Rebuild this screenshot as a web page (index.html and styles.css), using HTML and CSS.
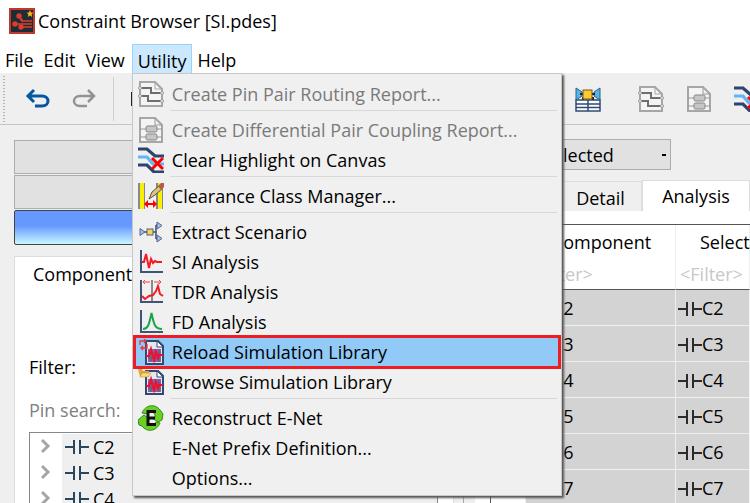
FILE: index.html
```
<!DOCTYPE html>
<html lang="en">
<head>
<meta charset="utf-8">
<title>Constraint Browser [SI.pdes]</title>
<link rel="stylesheet" href="styles.css">
</head>
<body>
<svg class="defs" aria-hidden="true">
  <symbol id="route" viewBox="0 0 26 26">
    <path d="M2 1H17L24 8V25H2Z" fill="#f4f4f4" stroke="#a6a6a6" stroke-width="2"/>
    <path d="M17 1V8H24" fill="none" stroke="#a6a6a6" stroke-width="1"/>
    <path d="M2 7H13V12H24M2 15H10V20H24" fill="none" stroke="#6e6e6e" stroke-width="2"/>
    <g fill="#eee" stroke="#999"><circle cx="2" cy="7" r="1.5"/><circle cx="24" cy="12" r="1.5"/><circle cx="2" cy="15" r="1.5"/><circle cx="24" cy="20" r="1.5"/></g>
  </symbol>
  <symbol id="couple" viewBox="0 0 26 26">
    <path d="M2 1H17L24 8V25H2Z" fill="#f4f4f4" stroke="#a6a6a6" stroke-width="2"/>
    <path d="M17 1V8H24M2 12H24M2 20H24" fill="none" stroke="#999" stroke-width="1"/>
    <g fill="#c6c6c6" stroke="#858585"><rect x="8" y="9" width="11" height="6" rx="1.5"/><rect x="8" y="17" width="11" height="6" rx="1.5"/></g>
  </symbol>
  <symbol id="clear" viewBox="0 0 26 26">
    <g fill="none" stroke-width="3.2"><path d="M0 10H9L15 17H26" stroke="#64b5f6"/><path d="M0 2H9L17 9H26M0 18H9L16 25H26" stroke="#2b4570"/></g>
    <path d="M14 11L25 22M25 11L14 22" stroke="#f00" stroke-width="3"/>
  </symbol>
  <symbol id="wave" viewBox="0 0 26 26">
    <path d="M8 2H20L25 7V25H8Z" fill="#e2e7f0" stroke="#34496f" stroke-width="2"/>
    <path d="M19 2V8H25Z" fill="#fff" stroke="#34496f"/>
    <rect x="10" y="10" width="13" height="13" fill="#93609f"/>
    <path d="M13 10V23M17 10V23M21 10V23M10 14H23M10 19H23" stroke="#6a4688" stroke-width=".7"/>
    <path d="M8 17H11L13 10L16 21L18 13L20 19L21 16H25" fill="none" stroke="#f01028" stroke-width="2"/>
  </symbol>
  <symbol id="cap" viewBox="0 0 24 16"><path d="M0 8H9M15 8H24M9 1V15M15 1V15" stroke="currentColor" stroke-width="2"/></symbol>
  <symbol id="chev" viewBox="0 0 10 16"><path d="M1 2L7 8L1 14" fill="none" stroke="#a5a5a5" stroke-width="3"/></symbol>
</svg>

<header class="titlebar">
  <svg class="logo" viewBox="0 0 26 26"><rect x="1" y="1" width="24" height="24" fill="#1d2c37" stroke="#c0392b" stroke-width="2"/>
    <g fill="#dc3c2a"><circle cx="10" cy="8" r="2.700"/><circle cx="6" cy="16" r="2.700"/><circle cx="12" cy="19" r="2.700"/></g>
    <path d="M10 8L14 13H23M6 16H23M12 19H23M11 11L14 14" fill="none" stroke="#dc3c2a" stroke-width="1.300"/>
    <path d="M21 2L22 4.500L24.500 4.700L22.600 6.300L23.200 9L21 7.500L18.800 9L19.400 6.300L17.500 4.700L20 4.500Z" fill="#fbb51d"/></svg>
  <h1>Constraint Browser [SI.pdes]</h1>
</header>

<nav class="menubar">
  <button>File</button><button>Edit</button><button>View</button>
  <div class="drop">
    <button class="open">Utility</button>
    <div class="menu" role="menu">
      <button role="menuitem" disabled><svg><use href="#route"/></svg>Create Pin Pair Routing Report...</button>
      <hr>
      <button role="menuitem" disabled><svg><use href="#couple"/></svg>Create Differential Pair Coupling Report...</button>
      <button role="menuitem"><svg><use href="#clear"/></svg>Clear Highlight on Canvas</button>
      <hr>
      <button role="menuitem"><svg viewBox="0 0 26 26"><rect width="7" height="26" fill="#888"/><rect x="2" width="4" height="26" fill="#f8f000"/><rect x="18" width="7" height="26" fill="#888"/><rect x="20" width="4" height="26" fill="#f8f000"/><path d="M11 16L14 9L21 3L24 6L17 12Z" fill="#d9c67c" stroke="#5d5137"/><path d="M20 3L23 0H26V4L23 7Z" fill="#b65b4c"/><path d="M8 21H17" stroke="#f00" stroke-width="2"/><path d="M6 21L10 17V25ZM19 21L15 17V25Z" fill="#f00"/></svg>Clearance Class Manager...</button>
      <hr>
      <button role="menuitem"><svg viewBox="0 0 26 26"><path d="M5 13H18M18 6V20M18 6H20M18 20H20" fill="none" stroke="#3c4d70" stroke-width="1.500"/><g fill="#a9bde4" stroke="#52698f"><path d="M2 9.500L7 13L2 16.500Z"/><path d="M19 3L24 6.500L19 10Z"/><path d="M19 16L24 19.500L19 23Z"/></g><rect x="9" y="10" width="6" height="6" fill="#f8cf67" stroke="#52606e"/></svg>Extract Scenario</button>
      <button role="menuitem"><svg viewBox="0 0 26 26"><path d="M3 1V23H25" fill="none" stroke="#405478" stroke-width="2"/><path d="M4 13H6L8 5L11 19L13 10L15 14L17 12L19 13H24" fill="none" stroke="#f41c24" stroke-width="2"/></svg>SI Analysis</button>
      <button role="menuitem"><svg viewBox="0 0 26 26"><path d="M3 1V23H25" fill="none" stroke="#405478" stroke-width="2"/><path d="M14 1V22" stroke="#222"/><path d="M5 3H12M16 3H23M7 1L5 3L7 5M21 1L23 3L21 5" fill="none" stroke="#e44"/><path d="M4 17L7 20L11 17L15 16L18 12L20 7L22 15L25 17" fill="none" stroke="#f41c24" stroke-width="2"/></svg>TDR Analysis</button>
      <button role="menuitem"><svg viewBox="0 0 26 26"><path d="M3 1V23H25" fill="none" stroke="#405478" stroke-width="2"/><path d="M5 20C10 20 11 16 13.500 4C16 16 17 20 24 20" fill="none" stroke="#1ba548" stroke-width="2"/></svg>FD Analysis</button>
      <button role="menuitem" class="active"><svg viewBox="0 0 26 26"><use href="#wave"/><path d="M2 6V2H8M6 0L8 2L6 4M9 5V9H3M5 7L3 9L5 11" fill="none" stroke="#f0323c" stroke-width="1.300"/></svg>Reload Simulation Library</button>
      <button role="menuitem"><svg viewBox="0 0 26 26"><use href="#wave"/><path d="M0 0H4L5 2H11V8H2Z" fill="#dda83a"/><path d="M2 8L4 4H13L10 8Z" fill="#fbd878" stroke="#b98b35" stroke-width=".5"/></svg>Browse Simulation Library</button>
      <hr>
      <button role="menuitem"><svg viewBox="0 0 26 26"><path d="M4 8C7 0 17-2 22 5L25 9L24 15L20 17L14 13H17C18 7 12 4 9 9Z" fill="#69cf25" stroke="#318c16"/><path d="M22 18C19 26 9 28 4 21L1 20L0 15L6 10L12 14L9 16C10 21 16 21 18 17Z" fill="#69cf25" stroke="#318c16"/><path d="M18 6.500H10V19.500H18M10 13H17" fill="none" stroke="#111" stroke-width="3"/></svg>Reconstruct E-Net</button>
      <button role="menuitem"><svg></svg>E-Net Prefix Definition...</button>
      <button role="menuitem"><svg></svg>Options...</button>
    </div>
  </div>
  <button>Help</button>
</nav>

<div class="toolbar">
  <div class="tools">
    <i class="grip"></i>
    <button aria-label="Undo"><svg viewBox="0 0 26 26"><path d="M9 4L3 10L9 16M3 10H17C25 10 25 20 17 20H10" fill="none" stroke="#0557a4" stroke-width="3"/></svg></button>
    <button aria-label="Redo"><svg viewBox="0 0 26 26"><path d="M17 4L23 10L17 16M23 10H9C1 10 1 20 9 20H16" fill="none" stroke="#929292" stroke-width="2.500"/></svg></button>
    <i class="rule"></i>
    <i class="peek"></i>
  </div>
  <div class="tools right">
    <button aria-label="Component table"><svg viewBox="0 0 26 26"><path d="M1 14H25V25H1ZM1 18H25M1 21.500H25M13 14V25" fill="#fff" stroke="#304a76" stroke-width="1.500"/><path d="M1 2L7 6V10L1 14ZM25 2L19 6V10L25 14Z" fill="#52b7e8" stroke="#305d88"/><path d="M5 8H20M8 11V14M18 11V14" stroke="#222" stroke-width="2"/><rect x="8" y="4" width="9" height="9" fill="#ffc928" stroke="#6c5930"/></svg></button>
    <i class="rule tall"></i><i class="grip"></i>
    <button aria-label="Routing report"><svg><use href="#route"/></svg></button>
    <button aria-label="Coupling report"><svg><use href="#couple"/></svg></button>
    <button aria-label="Clear highlight"><svg><use href="#clear"/></svg></button>
  </div>
</div>

<main class="workspace">
  <section class="side">
    <button class="bar" aria-label="First view"></button>
    <button class="bar" aria-label="Second view"></button>
    <button class="bar current" aria-label="Current view"></button>
    <div class="panel">
      <h2>Components</h2>
      <label for="filter">Filter:</label><input id="filter">
      <label class="pins" for="pins">Pin search:</label><input id="pins" disabled>
      <ul class="tree">
        <li><svg class="chev"><use href="#chev"/></svg><span><svg class="cap"><use href="#cap"/></svg>C2</span></li>
        <li><svg class="chev"><use href="#chev"/></svg><span><svg class="cap"><use href="#cap"/></svg>C3</span></li>
        <li><svg class="chev"><use href="#chev"/></svg><span><svg class="cap"><use href="#cap"/></svg>C4</span></li>
      </ul>
    </div>
  </section>
  <i class="splitter"></i>
  <section class="content">
    <select aria-label="Scope"><option>Selected</option></select>
    <div class="tabs"><button>Detail</button><button class="on">Analysis</button></div>
    <div class="sheet">
      <table>
        <colgroup><col class="num"><col class="comp"><col></colgroup>
        <thead>
          <tr><th></th><th>Component</th><th class="sel">Select</th></tr>
          <tr class="filters"><td></td><td><input aria-label="Filter component" placeholder="&lt;Filter&gt;"></td><td><input aria-label="Filter select" placeholder="&lt;Filter&gt;"></td></tr>
        </thead>
        <tbody>
          <tr><th></th><td><svg class="cap"><use href="#cap"/></svg>C2</td><td><svg class="cap"><use href="#cap"/></svg>C2</td></tr>
          <tr><th></th><td><svg class="cap"><use href="#cap"/></svg>C3</td><td><svg class="cap"><use href="#cap"/></svg>C3</td></tr>
          <tr><th></th><td><svg class="cap"><use href="#cap"/></svg>C4</td><td><svg class="cap"><use href="#cap"/></svg>C4</td></tr>
          <tr><th></th><td><svg class="cap"><use href="#cap"/></svg>C5</td><td><svg class="cap"><use href="#cap"/></svg>C5</td></tr>
          <tr><th></th><td><svg class="cap"><use href="#cap"/></svg>C6</td><td><svg class="cap"><use href="#cap"/></svg>C6</td></tr>
          <tr><th></th><td><svg class="cap"><use href="#cap"/></svg>C7</td><td><svg class="cap"><use href="#cap"/></svg>C7</td></tr>
        </tbody>
      </table>
    </div>
  </section>
</main>
</body>
</html>
```
FILE: styles.css
```
* { box-sizing: border-box; }
body {
  margin: 0;
  height: 100vh;
  overflow: hidden;
  display: flex;
  flex-direction: column;
  background: #efefef;
  color: #000;
  font: 18px/24px "Open Sans", "Noto Sans", sans-serif;
}
button, input, select { font: inherit; color: inherit; }
button { border: 0; padding: 0; background: none; white-space: nowrap; }
svg { width: 26px; height: 26px; flex: none; }
.defs { position: absolute; width: 0; height: 0; }

.titlebar { display: flex; align-items: center; gap: 3px; padding: 0 9px 2px; height: 44px; flex: none; background: #fff; }
h1, h2 { margin: 0; font: inherit; }

.menubar { display: flex; height: 29px; flex: none; background: #fff; }
.menubar > button, .open { padding: 0 5px; height: 29px; line-height: 32px; }
.open { border: 1px solid #99d1ff; border-bottom: 0; background: #cce8ff; }
.drop { position: relative; margin-left: 2px; }
.menu {
  position: absolute;
  z-index: 5;
  top: 29px;
  left: 0;
  width: 430px;
  padding: 5px 0 2px;
  background: #f0f0f0;
  border: 1px solid #c8c8c8;
  box-shadow: 2px 2px 2px #555;
}
.menu button { display: flex; align-items: center; gap: 8px; width: 100%; height: 30px; padding-left: 5px; }
.menu button:disabled { color: #7a7a7a; }
.menu hr { height: 6px; margin: 0 4px 0 37px; border: 0; background: linear-gradient(#d8d8d8, #d8d8d8) 0 1px / 100% 1px no-repeat; }
.menu .active { background: #91c9f7; outline: 3px solid #ee1c25; outline-offset: -1px; width: 424px; margin-left: 2px; padding-left: 3px; }

.toolbar { display: flex; justify-content: space-between; height: 52px; flex: none; border-bottom: 1px solid #c6c6c6; }
.tools { display: flex; align-items: center; }
.tools button { display: flex; margin-left: 20px; }
.tools .grip { width: 2px; height: 46px; margin-left: 3px; background: repeating-linear-gradient(#b4b4b4 0 1px, #efefef 1px 3px); }
.rule { width: 1px; height: 44px; margin-left: 16px; background: #d0d0d0; }
.rule.tall { height: 51px; margin-left: 12px; background: #bbb; }
.peek { width: 6px; height: 14px; margin-left: 17px; background: #222; }
.right { width: 175px; }
.right button { margin-left: 22px; }
.right button:first-child { margin-left: 0; }

.workspace { display: flex; flex: 1; min-height: 0; }
.side { width: 454px; flex: none; display: flex; flex-direction: column; padding: 15px 0 0 14px; }
.bar { height: 34px; flex: none; margin-bottom: 1px; background: #e1e1e1; border: 1px solid #adadad; }
.current { height: 35px; background: linear-gradient(#6699ff 45%, #c8f8ff); border-color: #444; border-radius: 2px; }
.panel {
  flex: 1;
  display: grid;
  grid-template-columns: 110px 1fr;
  grid-template-rows: 93px 43px 34px auto;
  align-content: start;
  margin-top: 10px;
  padding: 5px 15px 0 14px;
  background: #fff;
  border: 1px solid #ddd;
}
h2 { grid-column: span 2; padding-left: 4px; }
.panel input { height: 28px; min-width: 0; border: 1px solid #888; }
.pins { color: #808080; }
.tree { grid-column: span 2; margin: 0; padding: 1px 0 0; list-style: none; border: 1px solid #828790; }
.tree li { display: flex; height: 26px; }
.chev { width: 10px; height: 16px; margin: 4px 11px; }
.tree span { flex: 1; display: flex; align-items: center; gap: 4px; padding-left: 3px; background: #efefef; }
.cap { width: 24px; height: 16px; color: #2b2b2b; }
.tree .cap { color: #29475c; }
.splitter { width: 21px; flex: none; background: linear-gradient(#aaa, #aaa) 9px 0 / 1px 100% no-repeat; }

.content { flex: 1; min-width: 0; display: flex; flex-direction: column; }
select { appearance: none; flex: none; width: 130px; height: 31px; margin: 14px 0 10px 66px; padding: 0 1px; border: 1px solid #adadad; border-radius: 0; background: #e1e1e1 linear-gradient(#000, #000) 120px 14px / 4px 2px no-repeat; }
.tabs { display: flex; flex: none; height: 31px; padding-left: 84px; }
.tabs button { width: 83px; margin-top: 1px; padding-top: 3px; border: 1px solid #ddd; border-bottom: 0; }
.tabs .on { width: 108px; margin: 0; padding: 0; background: #fff; }
.sheet { flex: 1; padding: 13px 0 0 15px; background: #fff; }
table { width: 100%; table-layout: fixed; border-collapse: separate; border-spacing: 0; border-top: 1px solid #555; border-left: 1px solid #555; }
.num { width: 35px; }
.comp { width: 150px; }
th, td { height: 36px; padding: 0 0 0 2px; font-weight: 400; text-align: left; border-right: 1px solid #efefef; white-space: nowrap; }
thead th { height: 33px; text-align: center; }
thead .sel { padding-left: 24px; text-align: left; }
.filters td { height: 32px; border-bottom: 1px solid #555; }
.filters input { width: 100%; padding: 0 2px; border: 0; background: none; }
input::placeholder { color: #c8c8c8; opacity: 1; }
tbody td { background: #d3d3d3; border-bottom: 1px solid #efefef; }
tbody .cap { vertical-align: -2px; }
```
